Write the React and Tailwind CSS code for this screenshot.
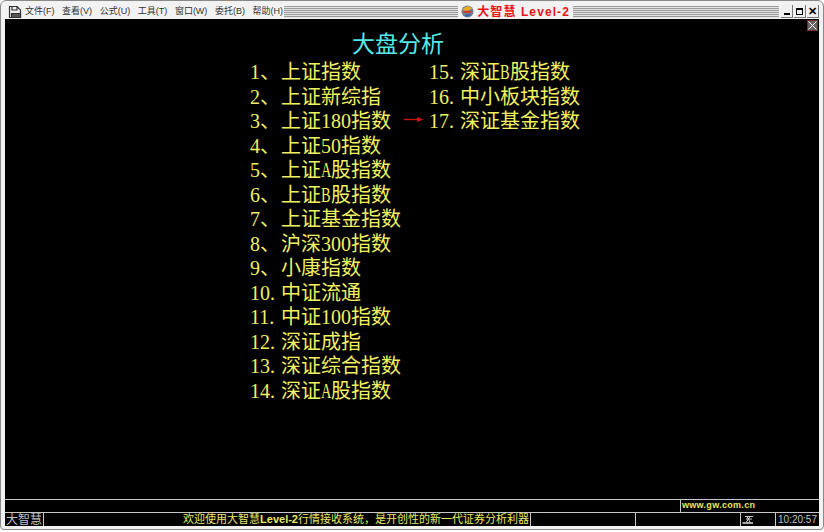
const menus = ["文件(F)", "查看(V)", "公式(U)", "工具(T)", "窗口(W)", "委托(B)", "帮助(H)"];

const leftRows = [
  ["1、", "上证指数"],
  ["2、", "上证新综指"],
  ["3、", "上证180指数"],
  ["4、", "上证50指数"],
  ["5、", "上证", "A", "股指数"],
  ["6、", "上证", "B", "股指数"],
  ["7、", "上证基金指数"],
  ["8、", "沪深300指数"],
  ["9、", "小康指数"],
  ["10.", "中证流通"],
  ["11.", "中证100指数"],
  ["12.", "深证成指"],
  ["13.", "深证综合指数"],
  ["14.", "深证", "A", "股指数"],
];

const rightRows = [
  ["15.", "深证", "B", "股指数"],
  ["16.", "中小板块指数"],
  ["17.", "深证基金指数"],
];

const stripes =
  "h-[12px] bg-[repeating-linear-gradient(to_bottom,#9a9a9a_0px,#9a9a9a_1px,#e4e4e4_1px,#e4e4e4_2px)]";

function Logo() {
  return (
    <svg width="13" height="13" viewBox="0 0 13 13">
      <circle cx="6.5" cy="6.5" r="6" fill="#6f7f92" />
      <path d="M1.5 5 A5.5 5.5 0 0 1 11 3.5 L6.5 6 Z" fill="#e8b020" />
      <path d="M1 7 Q6.5 4.5 12 7 Q7 9 1 7 Z" fill="#d8342a" />
      <path d="M3 10.5 Q6.5 8 10.5 9.5 Q7 13 3 10.5 Z" fill="#3a62b0" />
    </svg>
  );
}

function AppIcon() {
  return (
    <svg width="14" height="14" viewBox="0 0 14 14" fill="none" stroke="#333" strokeWidth="1.2">
      <path d="M1.5 1.5 H9 L12.5 5 V12.5 H1.5 Z" fill="#eee" />
      <path d="M4 1.5 V5 H9 V1.5" />
      <path d="M3.5 8.5 H12.5 V12.5 H3.5 Z" fill="#555" />
    </svg>
  );
}

function WinButton({ children }) {
  return (
    <div className="flex h-[13px] w-[12px] items-center justify-center border-r border-b border-[#777] bg-[#f0f0f0]">
      {children}
    </div>
  );
}

function Row({ parts }) {
  const [num, name, letter, rest] = parts;
  return (
    <div className="flex h-[24.5px] whitespace-nowrap leading-[24.5px]">
      <span className="w-[31px] shrink-0">{num}</span>
      <span>{name}</span>
      {/* half width latin letter like the bitmap font */}
      {letter && <span className="inline-block w-[10px] origin-left scale-x-72">{letter}</span>}
      {rest && <span>{rest}</span>}
    </div>
  );
}

export default function App() {
  return (
    <div className="h-[532px] w-[824px] overflow-hidden bg-white font-['Liberation_Sans','Noto_Sans_CJK_SC',sans-serif]">
      <div className="relative flex h-[530px] w-[824px] flex-col rounded-t-[6px] rounded-b-[4px] border border-[#8a8a8a] bg-[#f2f2f2] px-[4px] pb-[3px] pt-[3px]">
        {/* Menu and caption strip */}
        <div className="flex h-[15px] shrink-0 items-center">
          <div className="ml-[3px] flex w-[17px] shrink-0">
            <AppIcon />
          </div>
          <div className="flex w-[259px] shrink-0 gap-[7.6px] text-[9px] text-[#333]">
            {menus.map((m) => (
              <span key={m} className="whitespace-nowrap">{m}</span>
            ))}
          </div>
          <div className={`flex-1 ${stripes}`} />
          <div className="mx-[3px] flex shrink-0 items-center gap-[3px]">
            <Logo />
            <span className="whitespace-nowrap text-[12px] font-bold tracking-[1.1px] text-[#e81414]">大智慧 Level-2</span>
          </div>
          <div className={`w-[206px] shrink-0 ${stripes}`} />
          <div className="ml-[2px] flex shrink-0 gap-px">
            <WinButton>
              <div className="mt-[6px] h-[2px] w-[6px] bg-black" />
            </WinButton>
            <WinButton>
              <div className="h-[7px] w-[7px] border border-t-2 border-black" />
            </WinButton>
            <WinButton>
              <span className="text-[11px] font-bold leading-none text-black">✕</span>
            </WinButton>
          </div>
        </div>

        {/* Black quote board */}
        <div className="relative flex min-h-0 flex-1 flex-col bg-black">
          <div className="absolute right-[1px] top-[1px] flex h-[11px] w-[11px] items-center justify-center border border-[#802828] bg-[#666]">
            <svg width="9" height="9" viewBox="0 0 9 9" stroke="#fff" strokeWidth="1">
              <path d="M0.5 0.5 L8.5 8.5 M8.5 0.5 L0.5 8.5" />
            </svg>
          </div>

          <div className="flex-1 font-['Liberation_Serif','Noto_Sans_CJK_SC',serif]">
            <div className="pl-[347px] pt-[11px] text-[23px] leading-[30px] text-[#55e8e8]">大盘分析</div>
            <div className="flex pl-[245px] text-[20px] text-[#f0f060]">
              <div className="w-[179px] shrink-0">
                {leftRows.map((r) => (
                  <Row key={r[0]} parts={r} />
                ))}
              </div>
              <div className="relative">
                {rightRows.map((r) => (
                  <Row key={r[0]} parts={r} />
                ))}
                <svg className="absolute left-[-25px] top-[56px]" width="20" height="7" viewBox="0 0 20 7">
                  <path d="M0 3.5 H15" fill="none" stroke="#c81414" strokeWidth="1.4" />
                  <path d="M13 1 L19.5 3.5 L13 6 Z" fill="#c81414" />
                </svg>
              </div>
            </div>
          </div>

          {/* Status bars */}
          <div className="flex h-[13px] shrink-0 border-t border-[#c8c8c8]">
            <div className="ml-[675px] flex items-center border-l border-[#c8c8c8] pl-[1px] text-[9px] font-bold tracking-[0.3px] text-[#e8e860]">
              www.gw.com.cn
            </div>
          </div>
          <div className="flex h-[14px] shrink-0 border-t border-[#c8c8c8] text-[#c0c0c0]">
            <div className="flex w-[39px] shrink-0 items-center justify-center border-r border-[#c8c8c8] text-[12px] leading-none">大智慧</div>
            <div className="flex w-[487px] shrink-0 items-center justify-end whitespace-nowrap border-r border-[#c8c8c8] pr-[1px] text-[11px] leading-none text-[#e8e860]">
              欢迎使用大智慧<span className="font-bold">Level-2</span>行情接收系统，是开创性的新一代证券分析利器
            </div>
            <div className="w-[105px] shrink-0 border-r border-[#c8c8c8]" />
            <div className="w-[105px] shrink-0 border-r border-[#c8c8c8]" />
            <div className="flex w-[35px] shrink-0 items-center pl-[1px] border-r border-[#c8c8c8]">
              <svg width="12" height="10" viewBox="0 0 12 10" fill="none" stroke="#d0d0d0" strokeWidth="1">
                <path d="M3 1.5 H11 M4 4 H10" />
                <path d="M5 1.5 L8 7 M8 1.5 L4.5 7" />
                <path d="M0.5 8 H11" strokeWidth="1.6" />
              </svg>
            </div>
            <div className="flex flex-1 items-center justify-center whitespace-nowrap text-[10px] leading-none">10:20:57</div>
          </div>
        </div>
      </div>
    </div>
  );
}
